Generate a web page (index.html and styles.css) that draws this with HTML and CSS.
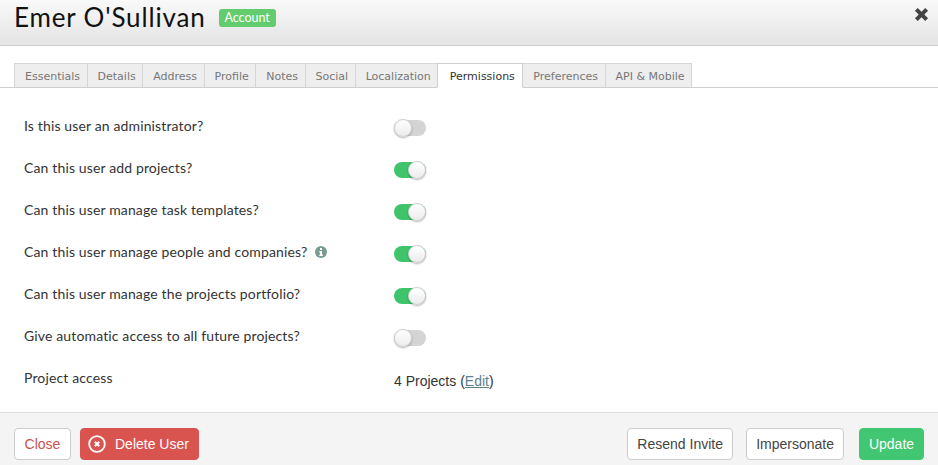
FILE: index.html
```html
<!DOCTYPE html>
<html lang="en">
<head>
<meta charset="utf-8">
<title>Emer O'Sullivan</title>
<link rel="stylesheet" href="styles.css">
</head>
<body>
<div class="modal">
  <header class="head">
    <h1 class="name">Emer O'Sullivan</h1>
    <span class="badge">Account</span>
    <svg class="close-x" width="15" height="15" viewBox="0 0 16 16"><path d="M1 4l3-3 4 4 4-4 3 3-4 4 4 4-3 3-4-4-4 4-3-3 4-4z" fill="#444"/></svg>
  </header>
  <nav class="tabs">
    <a class="tab">Essentials</a><a class="tab">Details</a><a class="tab">Address</a><a class="tab">Profile</a><a class="tab">Notes</a><a class="tab">Social</a><a class="tab">Localization</a><a class="tab active">Permissions</a><a class="tab">Preferences</a><a class="tab">API &amp; Mobile</a>
  </nav>
  <main class="rows">
    <div class="row"><span class="label">Is this user an administrator?</span><span class="switch"><i class="knob"></i></span></div>
    <div class="row"><span class="label">Can this user add projects?</span><span class="switch on"><i class="knob"></i></span></div>
    <div class="row"><span class="label">Can this user manage task templates?</span><span class="switch on"><i class="knob"></i></span></div>
    <div class="row"><span class="label">Can this user manage people and companies?
      <svg class="info" width="12" height="12" viewBox="0 0 12 12"><circle cx="6" cy="6" r="6" fill="#7a9c90"/><rect x="5" y="2" width="2" height="2" fill="#fff"/><path d="M4.3 5h2.7v3.6h.8V10H4.3V8.6h.8V6.4h-.8z" fill="#fff"/></svg></span><span class="switch on"><i class="knob"></i></span></div>
    <div class="row"><span class="label">Can this user manage the projects portfolio?</span><span class="switch on"><i class="knob"></i></span></div>
    <div class="row"><span class="label">Give automatic access to all future projects?</span><span class="switch"><i class="knob"></i></span></div>
    <div class="row"><span class="label">Project access</span><span class="access">4 Projects (<a class="edit">Edit</a>)</span></div>
  </main>
  <footer class="foot">
    <button class="btn btn-close">Close</button>
    <button class="btn btn-delete"><svg width="18" height="18" viewBox="0 0 18 18"><circle cx="9" cy="9" r="7.8" fill="none" stroke="#fff" stroke-width="1.8"/><path d="M6.8 6.8l4.4 4.4M11.2 6.8l-4.4 4.4" stroke="#fff" stroke-width="2"/></svg>Delete User</button>
    <span class="spacer"></span>
    <button class="btn btn-resend">Resend Invite</button>
    <button class="btn">Impersonate</button>
    <button class="btn btn-update">Update</button>
  </footer>
</div>
</body>
</html>
```
FILE: styles.css
```css
* { box-sizing: border-box; }
html, body { margin: 0; padding: 0; background: #fff; }
.modal { width: 938px; height: 465px; display: flex; flex-direction: column; overflow: hidden; font-family: "Lato", "Liberation Sans", sans-serif; color: #333; }
.head { height: 46px; flex: none; display: flex; align-items: flex-start; padding-left: 14px; background: linear-gradient(#f9f9f9, #e4e4e4); border-bottom: 1px solid #cfcfcf; position: relative; }
.name { margin: 0; font-size: 26px; line-height: 34px; font-weight: 400; color: #111; letter-spacing: 0.85px; }
.badge { margin: 9px 0 0 13px; height: 18px; width: 57px; text-align: center; line-height: 17px; font-size: 12.5px; color: #fff; background: #62cc6e; border-radius: 3px; }
.close-x { position: absolute; right: 9px; top: 7px; }
.tabs { margin-top: 17px; height: 25px; flex: none; padding-left: 14px; display: flex; border-bottom: 1px solid #cfcfcf; font-family: "DejaVu Sans", sans-serif; font-size: 11px; }
.tab { height: 25px; padding: 0 6.5px 0 10px; line-height: 25px; color: #777; background: #eee; border: 1px solid #d6d6d6; border-bottom-color: #cfcfcf; border-left-width: 0; white-space: nowrap; }
.tab:first-child { border-left-width: 1px; }
.tab.active { color: #333; background: #fff; border-color: #cfcfcf; border-bottom-color: #fff; border-left-width: 1px; margin-left: -1px; padding: 0 7.5px 0 11.5px; }
.rows { flex: 1; padding: 17px 0 0 24px; font-size: 14px; letter-spacing: 0.14px; }
.row { height: 42px; display: flex; align-items: flex-start; }
.label { width: 370px; line-height: 42px; height: 42px; color: #333; white-space: nowrap; }
.info { vertical-align: -1px; margin-left: 4px; }
.switch { width: 32px; height: 16px; margin-top: 15px; border-radius: 8px; background: #d4d4d4; position: relative; flex: none; }
.switch.on { background: #3fc46c; }
.knob { position: absolute; left: 0; top: -1px; width: 18px; height: 18px; border-radius: 50%; background: linear-gradient(#fff, #ececec); border: 1px solid #d0d0d0; box-shadow: 0 1px 2px rgba(0,0,0,.3); }
.switch.on .knob { left: 14px; }
.access { font-family: "Liberation Sans", sans-serif; font-size: 14px; letter-spacing: 0; line-height: 48px; color: #333; }
.edit { color: #5b8190; text-decoration: underline; }
.foot { height: 53px; flex: none; display: flex; align-items: flex-start; gap: 13px; padding: 15px 14px 0; background: #f4f4f4; border-top: 1px solid #dcdcdc; }
.spacer { flex: 1; }
.btn { height: 32px; padding: 0 9px; font-family: "Liberation Sans", sans-serif; font-size: 14px; color: #444; background: #fff; border: 1px solid #ccc; border-radius: 4px; white-space: nowrap; }
.btn-resend { width: 106px; padding: 0; }
.btn-close { width: 57px; padding: 0; color: #c9524f; margin-right: -4px; }
.btn-delete { width: 119px; padding: 0 0 0 7px; color: #fff; background: #d9534f; border-color: #d9534f; display: flex; align-items: center; gap: 9px; }
.btn-update { width: 65px; padding: 0; margin-left: 2px; color: #fff; background: #41c671; border-color: #41c671; }
```
